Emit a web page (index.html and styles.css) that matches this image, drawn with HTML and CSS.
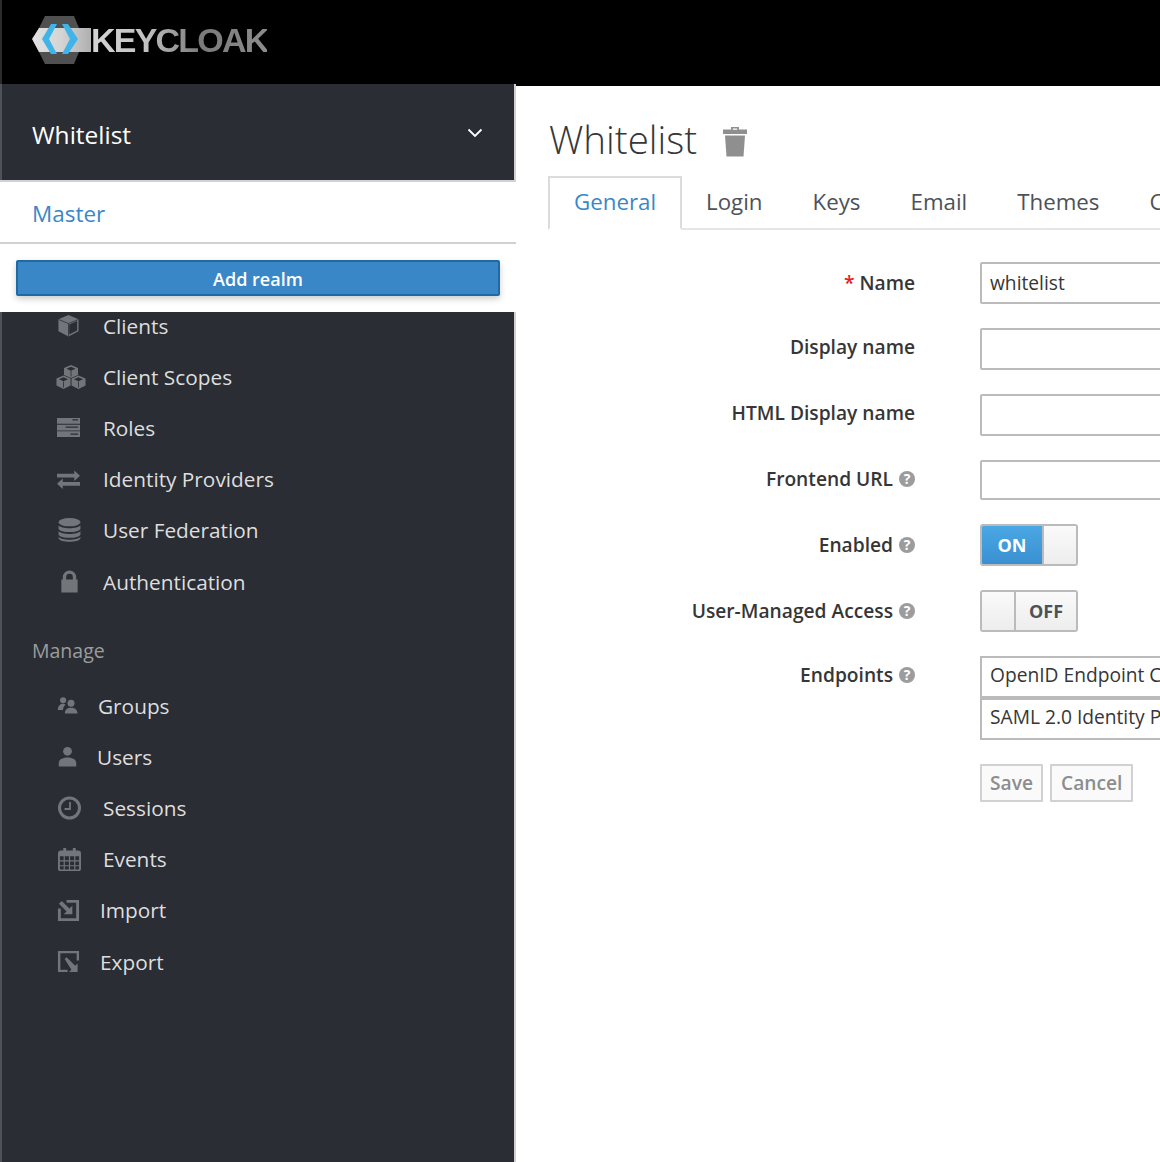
FILE: index.html
```html
<!DOCTYPE html>
<html lang="en">

<head>
 <meta charset="UTF-8">
 <meta name="viewport" content="width=device-width">
 <title>Keycloak Admin Console</title>
 <link rel="stylesheet" href="styles.css">
</head>

<body>

 <header class="topbar">
  <div class="logo">
   <svg class="logo-mark" width="60" height="48" viewBox="0 0 60 48">
    <defs>
     <linearGradient id="barra" x1="0" y1="0" x2="1" y2="0">
      <stop offset="0" stop-color="#e2e2e2"/>
      <stop offset="0.5" stop-color="#d4d4d4"/>
      <stop offset="1" stop-color="#b0b0b0"/>
     </linearGradient>
    </defs>
    <polygon points="13,0 42,0 52,24 42,48 13,48 1,24" fill="#505050"/>
    <polygon points="0,23 7,12 59,12 59,36 7,36" fill="url(#barra)"/>
    <polygon points="10,23 19,8 25,8 17,23 25,38 19,38" fill="#3fb4e8"/>
    <polygon points="46,23 36,8 30,8 38,23 30,38 36,38" fill="#3fb4e8"/>
   </svg>
   <span class="logo-text">KEYCLOAK</span>
  </div>
 </header>

 <div class="layout">

  <aside class="sidebar">
   <div class="realm">
    <span>Whitelist</span>
    <svg class="realm-arrow" width="16" height="10" viewBox="0 0 16 10"><path d="M1.500 1.500 8 8l6.500-6.500" fill="none" stroke="#fff" stroke-width="1.800"/></svg>
   </div>

   <div class="realm-menu">
    <a class="realm-link" href="#">Master</a>
    <div class="realm-add"><button type="button" class="btn-add">Add realm</button></div>
   </div>

   <nav class="nav">
    <ul class="nav-list">
     <li class="nav-item">
      <svg class="icon" viewBox="0 0 24 24"><path d="M12 1 22.500 5.500v12.500L12 23.500 1.500 18V5.500z"/><path d="M12.700 11 21 7.200v10l-8.300 4.300z" fill="#2a2d34"/><path d="M2 5.800 12 10l10-4.200M12 10v13" fill="none" stroke="#2a2d34" stroke-width="0.800"/></svg>
      <a href="#">Clients</a>
     </li>
     <li class="nav-item nav-item-wide">
      <svg class="icon icon-wide" viewBox="0 0 30 24"><path d="M15 0l7 3v7l-7 3-7-3V3z M7.500 10.500l7 3v7l-7 3.500-7-3.500v-7z M22.500 10.500l7 3v7l-7 3.500-7-3.500v-7z"/><path d="M15 1.800 19.500 3.800 15 5.800 10.500 3.800z M7.500 12.300l4.500 2-4.500 2-4.500-2z M22.500 12.300l4.500 2-4.500 2-4.500-2z" fill="#2a2d34"/><path d="M7.500 16.500v6M22.500 16.500v6M15 5.500v6" fill="none" stroke="#2a2d34" stroke-width="0.800"/></svg>
      <a href="#">Client Scopes</a>
     </li>
     <li class="nav-item">
      <svg class="icon" viewBox="0 0 24 24"><path d="M0 2h24v6H0z M0 9h24v6H0z M0 16h24v6H0z"/><path d="M16 4h6M9 11.500h13M14 19h8" stroke="#2a2d34" stroke-width="1.300"/></svg>
      <a href="#">Roles</a>
     </li>
     <li class="nav-item">
      <svg class="icon" viewBox="0 0 24 24"><path d="M0 6h18V2.500l6 5.500-6 5.500V10H0z M24 14.500H6V11L0 16.500 6 22v-3.500h18z"/></svg>
      <a href="#">Identity Providers</a>
     </li>
     <li class="nav-item">
      <svg class="icon icon-tall icon-nudge" viewBox="0 0 24 24"><ellipse cx="12" cy="4.500" rx="10.500" ry="4"/><path d="M1.500 7.500c2 3.800 19 3.800 21 0v3.500c-2 4-19 4-21 0z M1.500 13c2 3.800 19 3.800 21 0v3.500c-2 4-19 4-21 0z M1.500 18.500c2 3.800 19 3.800 21 0V20c-1 4.500-20 4.500-21 0z"/></svg>
      <a href="#">User Federation</a>
     </li>
     <li class="nav-item">
      <svg class="icon icon-nudge" viewBox="0 0 24 24"><path d="M5 10V7.500a7 7 0 0 1 14 0V10h1.500v13.500h-17V10z M8.500 10h7V7.500a3.500 3.500 0 0 0-7 0z" fill-rule="evenodd"/></svg>
      <a href="#">Authentication</a>
     </li>
    </ul>

    <h2 class="nav-title">Manage</h2>

    <ul class="nav-list">
     <li class="nav-item nav-item-groups">
      <svg class="icon icon-small" viewBox="0 0 24 24"><circle cx="7" cy="6" r="3.500"/><circle cx="16" cy="9.500" r="4"/><path d="M1 17c0-5 3-7 6-7 1 0 2 .3 2.700 .8C8 12.500 7 14.500 6.800 17z M9 21c0-4.500 3-6.500 7-6.500s7.500 2 7.500 6.500z"/></svg>
      <a href="#">Groups</a>
     </li>
     <li class="nav-item nav-item-users">
      <svg class="icon icon-user" viewBox="0 0 20 24"><circle cx="10" cy="6" r="5"/><path d="M0 23.500v-4c0-4 4-6.500 10-6.500s10 2.500 10 6.500v4z"/></svg>
      <a href="#">Users</a>
     </li>
     <li class="nav-item">
      <svg class="icon icon-clock icon-nudge" viewBox="0 0 24 24"><circle cx="12" cy="12" r="10" fill="none" stroke="#72767b" stroke-width="3"/><path d="M12.500 6v7H7" fill="none" stroke="#72767b" stroke-width="1.800"/></svg>
      <a href="#">Sessions</a>
     </li>
     <li class="nav-item">
      <svg class="icon icon-nudge" viewBox="0 0 24 24"><rect x="1" y="3.500" width="22" height="20" rx="2" fill="none" stroke="#72767b" stroke-width="2"/><path d="M1 3.500h22v5H1z M5.500 0h3v6h-3z M15.500 0h3v6h-3z"/><path d="M1 13.500h22M1 18.500h22M6.500 8v15M12 8v15M17.500 8v15" fill="none" stroke="#72767b" stroke-width="1.200"/></svg>
      <a href="#">Events</a>
     </li>
     <li class="nav-item nav-item-transfer">
      <svg class="icon" viewBox="0 0 24 24"><path d="M10 1H23V23H1V10h3v10h16V4H10z"/><path d="M2 5 5 2l8 8 3-3v9H7l3-3z"/></svg>
      <a href="#">Import</a>
     </li>
     <li class="nav-item nav-item-transfer">
      <svg class="icon" viewBox="0 0 24 24"><path d="M1 1H23V11h-2.500V3.500h-17v17H11V23H1z"/><path d="M8 9.500l2-2 9 9 2.500-2.500v9h-9l2.500-2.500z"/></svg>
      <a href="#">Export</a>
     </li>
    </ul>
   </nav>
  </aside>

  <main class="content">
   <h1 class="page-title">
    Whitelist
    <svg class="trash" width="24" height="30" viewBox="0 0 24 30"><path d="M8 2.500V0h8v2.500h8V7H0V2.500z M9.800 1.600v1.200h4.400V1.600z" fill="#8f8f8f" fill-rule="evenodd"/><path d="M2 8.500h20L20.500 29.500h-17z" fill="#8f8f8f"/></svg>
   </h1>

   <ul class="tabs">
    <li class="tab tab-active"><a href="#">General</a></li>
    <li class="tab"><a href="#">Login</a></li>
    <li class="tab"><a href="#">Keys</a></li>
    <li class="tab"><a href="#">Email</a></li>
    <li class="tab"><a href="#">Themes</a></li>
    <li class="tab"><a href="#">Cache</a></li>
    <li class="tab"><a href="#">Tokens</a></li>
   </ul>

   <form class="forma">
    <div class="row">
     <label class="row-label"><span class="required">*</span> Name</label>
     <input class="field" value="whitelist">
    </div>
    <div class="row row-up">
     <label class="row-label">Display name</label>
     <input class="field">
    </div>
    <div class="row row-up">
     <label class="row-label">HTML Display name</label>
     <input class="field">
    </div>
    <div class="row row-short">
     <label class="row-label">Frontend URL <span class="help">?</span></label>
     <input class="field">
    </div>
    <div class="row">
     <label class="row-label">Enabled <span class="help">?</span></label>
     <div class="toggle">
      <span class="toggle-on">ON</span>
      <span class="toggle-knob toggle-knob-right"></span>
     </div>
    </div>
    <div class="row">
     <label class="row-label">User-Managed Access <span class="help">?</span></label>
     <div class="toggle">
      <span class="toggle-knob toggle-knob-left"></span>
      <span class="toggle-off">OFF</span>
     </div>
    </div>
    <div class="row row-up">
     <label class="row-label">Endpoints <span class="help">?</span></label>
     <div class="links">
      <a class="link-box" href="#">OpenID Endpoint Configuration</a>
      <a class="link-box" href="#">SAML 2.0 Identity Provider Metadata</a>
     </div>
    </div>
    <div class="row">
     <span></span>
     <div class="actions">
      <button type="button" class="btn-off">Save</button>
      <button type="button" class="btn-off btn-cancel">Cancel</button>
     </div>
    </div>
   </form>
  </main>

 </div>

</body>
</html>
```

FILE: styles.css
```css
html, body {
  margin: 0;
  height: 100%;
  overflow: hidden;
}
body {
  font-family: 'Open Sans', 'Noto Sans', sans-serif;
  background-color: white;
  color: #363636;
  display: flex;
  flex-direction: column;
}
a {
  color: inherit;
  text-decoration: none;
}
ul {
  list-style: none;
  margin: 0;
  padding: 0;
}

/* barra superior */
.topbar {
  background-color: black;
  height: 84px;
  flex: none;
  border-left: 2px solid #2b2b2b;
  box-sizing: border-box;
}
.logo {
  display: flex;
  align-items: center;
  padding: 16px 0 0 30px;
}
.logo-mark {
  flex: none;
  filter: blur(0.4px);
}
.logo-text {
  margin-left: -1px;
  font-family: 'Liberation Sans', Arial, sans-serif;
  font-size: 34px;
  line-height: 48px;
  font-weight: bold;
  letter-spacing: -1.800px;
  background: linear-gradient(90deg, #d4d4d4 0%, #c4c4c4 30%, #7a7a7a 62%, #8c8c8c 100%);
  -webkit-background-clip: text;
  background-clip: text;
  color: transparent;
  filter: blur(0.5px);
}

.layout {
  flex: 1;
  display: flex;
  min-height: 0;
}

/* menu lateral */
.sidebar {
  position: relative;
  flex: none;
  width: 516px;
  box-sizing: border-box;
  background-color: #2a2d34;
  border-left: 2px solid #4d5258;
  border-right: 2px solid #d1d1d1;
}
.realm {
  height: 96px;
  box-sizing: border-box;
  padding: 4px 31px 0 30px;
  display: flex;
  align-items: center;
  justify-content: space-between;
  color: white;
  font-size: 24.500px;
}
.realm-arrow {
  margin-top: -2px;
}
.realm-menu {
  position: absolute;
  left: -2px;
  right: -2px;
  top: 96px;
  height: 132px;
  box-sizing: border-box;
  background-color: white;
  border-top: 2px solid #d1d1d1;
}
.realm-link {
  display: block;
  height: 60px;
  line-height: 64px;
  padding-left: 32px;
  font-size: 22.500px;
  color: #3a87c8;
  border-bottom: 2px solid #d1d1d1;
}
.realm-add {
  padding: 16px;
}
.btn-add {
  display: block;
  width: 484px;
  height: 36px;
  padding: 2px 0 0;
  border: 2px solid #1f6aa5;
  border-radius: 2px;
  background-color: #3a87c8;
  box-shadow: 0 3px 6px rgba(0, 0, 0, 0.2);
  color: white;
  font-family: inherit;
  font-size: 18px;
  font-weight: 600;
}
.nav {
  padding-top: 120px;
}
.nav-list {
  padding-left: 54px;
}
.nav-item {
  height: 51.200px;
  display: flex;
  align-items: center;
  font-size: 20.800px;
  color: #dedede;
}
.nav-item a {
  margin-left: 22px;
}
.nav-item-wide a {
  margin-left: 17px;
}
.nav-item-groups a {
  margin-left: 19px;
}
.nav-item-users a {
  margin-left: 20px;
}
.nav-item-transfer a {
  margin-left: 19px;
}
.icon {
  flex: none;
  width: 25px;
  height: 23px;
  fill: #72767b;
}
.icon-wide {
  width: 30px;
  height: 24px;
}
.icon-tall {
  height: 26px;
}
.icon-small {
  width: 23px;
  height: 21px;
}
.icon-user {
  width: 19px;
  height: 21px;
  margin-left: 2px;
}
.icon-clock {
  height: 24px;
}
.icon-nudge {
  margin-left: 1px;
  margin-right: -1px;
}
.nav-title {
  margin: 30px 0 15px 30px;
  font-size: 19.500px;
  line-height: 28px;
  font-weight: 400;
  color: #9c9c9c;
}

/* contenido */
.content {
  flex: 1;
  min-width: 0;
  overflow: hidden;
  border-top: 2px solid black;
  padding: 0 0 0 32px;
}
.page-title {
  display: flex;
  align-items: center;
  margin: 0;
  height: 74px;
  padding: 16px 0 0 1px;
  font-size: 38.500px;
  font-weight: 300;
  white-space: nowrap;
}
.trash {
  margin: 5px 0 0 26px;
}
.tabs {
  display: flex;
  height: 54px;
  box-sizing: border-box;
  border-bottom: 2px solid #e5e5e5;
  margin-right: -200px;
  white-space: nowrap;
}
.tab {
  height: 52px;
  padding: 0 25px;
  line-height: 52px;
  font-size: 22.300px;
  color: #4d5258;
  box-sizing: border-box;
}
.tab-active {
  height: 54px;
  border: 2px solid #dcdcdc;
  border-bottom: 2px solid white;
  margin-right: -1px;
  padding: 0 24px;
  line-height: 48px;
  color: #3a87c8;
}
.forma {
  padding-top: 32px;
  width: 1000px;
}
.row {
  display: grid;
  grid-template-columns: 367px 1fr;
  column-gap: 65px;
  margin-bottom: 24px;
}
.row-label {
  display: block;
  text-align: right;
  font-size: 19.200px;
  font-weight: 600;
  line-height: 42px;
  white-space: nowrap;
}
.row-up .row-label {
  margin-top: -2px;
}
.row-short .row-label {
  margin-top: -1px;
  line-height: 40px;
}
.required {
  color: #e62121;
}
.help {
  display: inline-block;
  vertical-align: 2px;
  width: 16px;
  height: 16px;
  border-radius: 50%;
  background-color: #9c9c9c;
  color: white;
  font-size: 14px;
  line-height: 16px;
  font-weight: 700;
  text-align: center;
  margin-left: 1px;
}
.field {
  display: block;
  width: 600px;
  height: 42px;
  box-sizing: border-box;
  padding: 0 8px 2px;
  border: 2px solid #bbb;
  border-radius: 2px;
  font-family: inherit;
  font-size: 19.200px;
  color: #363636;
  outline: none;
}
.row-short .field {
  height: 40px;
}
.toggle {
  display: flex;
  width: 98px;
  height: 42px;
  box-sizing: border-box;
  border: 2px solid #bbb;
  border-radius: 3px;
  overflow: hidden;
}
.toggle-on {
  width: 60px;
  background: linear-gradient(#4aa8e4, #3a8fd0);
  color: white;
  text-align: center;
  font-size: 18px;
  font-weight: 700;
  line-height: 38px;
}
.toggle-off {
  flex: 1;
  background: linear-gradient(#fafafa, #ededed);
  color: #4d5258;
  text-align: center;
  font-size: 18px;
  font-weight: 700;
  line-height: 38px;
}
.toggle-knob {
  flex: 1;
  background: linear-gradient(#fafafa, #ededed);
}
.toggle-knob-right {
  border-left: 2px solid #bbb;
}
.toggle-knob-left {
  flex: none;
  width: 32px;
  border-right: 2px solid #bbb;
}
.links {
  display: flex;
  flex-direction: column;
}
.link-box {
  display: block;
  width: 600px;
  height: 42px;
  line-height: 34px;
  box-sizing: border-box;
  padding: 0 8px;
  border: 2px solid #bbb;
  font-size: 19.200px;
  white-space: nowrap;
}
.actions {
  display: flex;
  gap: 7px;
}
.btn-off {
  height: 38px;
  padding: 0 8px 2px;
  background-color: #fafafa;
  border: 2px solid #d1d1d1;
  border-radius: 1px;
  color: #8b8d8f;
  font-family: inherit;
  font-size: 19.200px;
  font-weight: 600;
}
.btn-cancel {
  padding: 0 9px 2px;
}
```
